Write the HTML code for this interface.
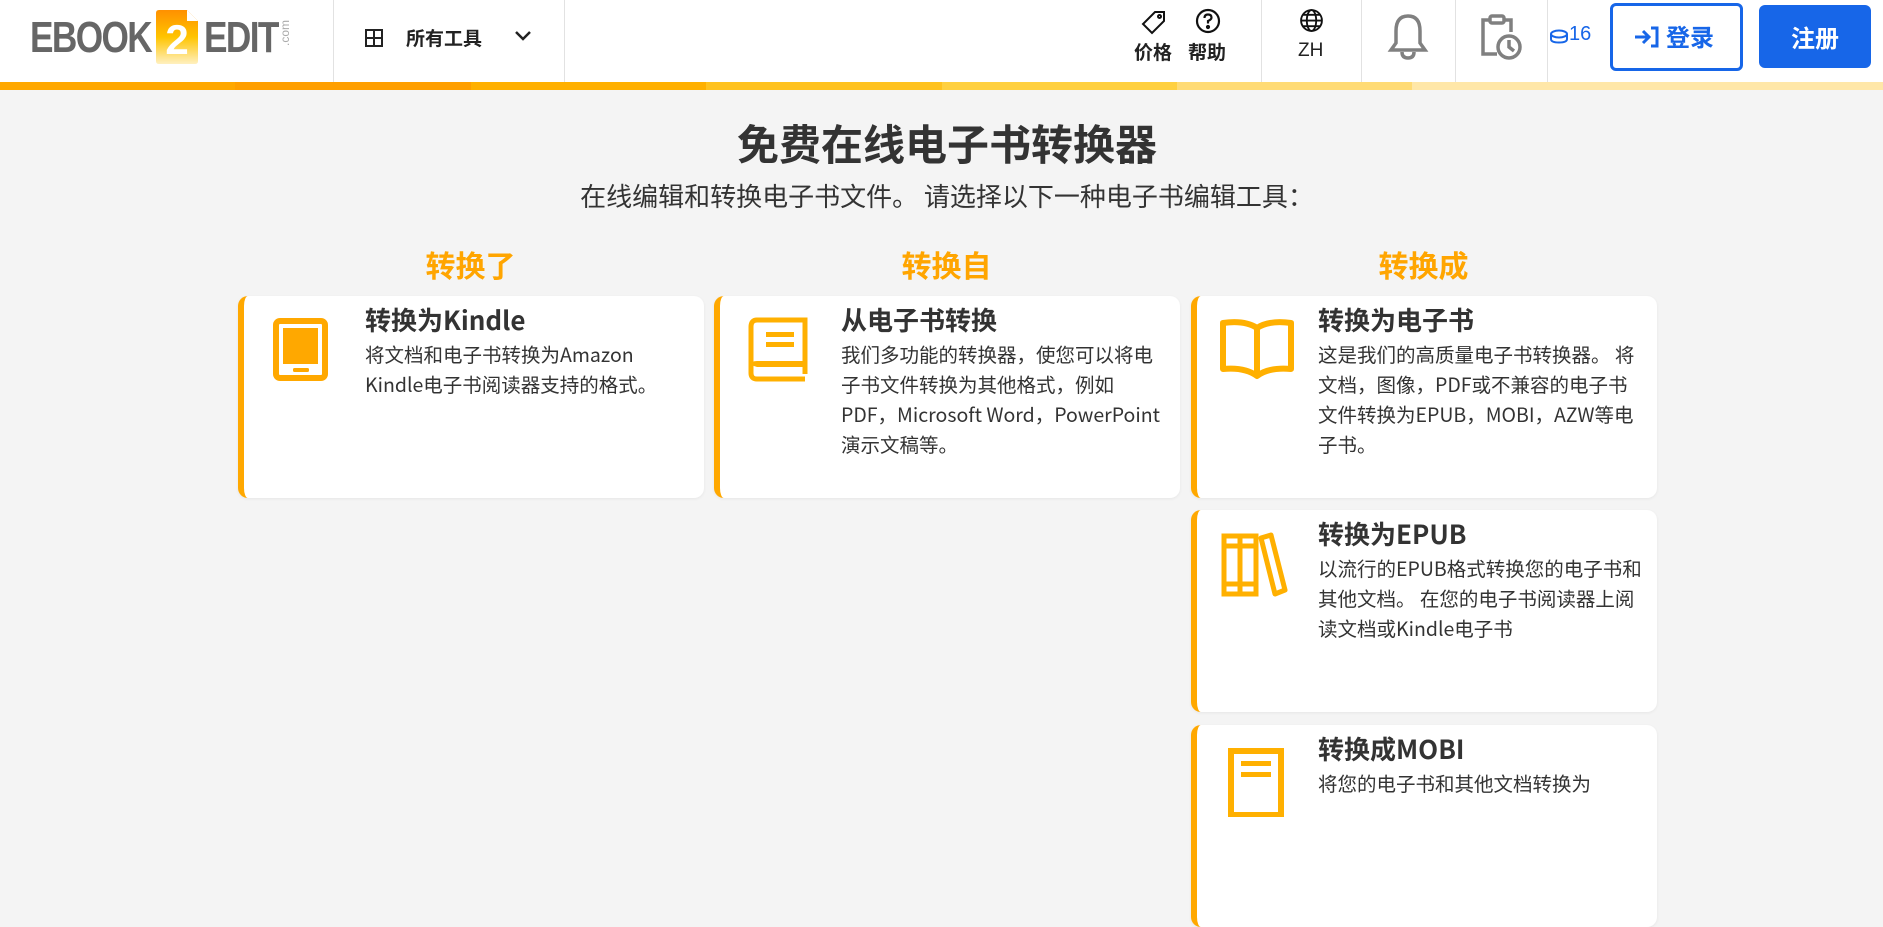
<!DOCTYPE html>
<html><head><meta charset="utf-8"><style>
*{box-sizing:border-box;margin:0;padding:0}
body{width:1883px;height:799px;overflow:hidden;background:#f4f4f4;font-family:"Liberation Sans","Noto Sans CJK SC",sans-serif;color:#333;position:relative}
.hdr{position:absolute;left:0;top:0;width:1883px;height:82px;background:#fff}
.bar{position:absolute;top:82px;left:0;width:1883px;height:8px;display:flex}
.bar div{flex:1}
.abs{position:absolute}
.div{position:absolute;top:0;width:1px;height:82px;background:#e2e2e2}
.nt{position:absolute;font-size:19px;font-weight:bold;color:#222;font-family:"Noto Sans CJK SC",sans-serif}
h1{position:absolute;left:0;width:1894px;text-align:center;top:116px;font-size:42px;font-weight:bold;color:#333;font-family:"Noto Sans CJK SC",sans-serif;line-height:54px}
.sub{position:absolute;left:0;width:1894px;text-align:center;top:179px;font-size:26px;color:#333;font-family:"Noto Sans CJK SC",sans-serif;line-height:34px}
.ch{position:absolute;top:245px;width:465px;text-align:center;font-size:30px;font-weight:bold;color:#ffa500;font-family:"Noto Sans CJK SC",sans-serif;line-height:38px}
.card{position:absolute;width:466px;background:#fff;border-radius:10px;border-left:6px solid #ffa800;box-shadow:0 1px 3px rgba(0,0,0,.06)}
.card svg{position:absolute;left:26px;top:20px}
.card .t{position:absolute;left:121px;top:6px;font-size:26px;font-weight:bold;color:#333;line-height:36px;font-family:"Noto Sans CJK SC",sans-serif}
.card .d{position:absolute;left:121px;top:43px;width:322px;font-size:19.5px;line-height:30px;color:#333;font-family:"Noto Sans CJK SC",sans-serif}
</style></head><body>
<div class="hdr"></div>
<div class="bar"><div style="background:#ffa800"></div><div style="background:#ff9f00"></div><div style="background:#ffb000"></div><div style="background:#ffc21f"></div><div style="background:#ffd040"></div><div style="background:#ffdb75"></div><div style="background:#ffe7a8"></div><div style="background:#ffe7a8"></div></div>

<div class="abs" style="left:30px;top:14px;font:bold 44px/48px 'Liberation Sans',sans-serif;color:#666;letter-spacing:-2px;transform:scaleX(.8);transform-origin:left">EBOOK</div>
<svg class="abs" style="left:156px;top:10px" width="42" height="54" viewBox="0 0 42 54">
<defs><linearGradient id="g" x1="0" y1="0" x2="0" y2="1"><stop offset="0" stop-color="#ff9000"/><stop offset=".5" stop-color="#ffc400"/><stop offset="1" stop-color="#fff0c0"/></linearGradient></defs>
<path d="M3 0H31L42 11V51Q42 54 39 54H3Q0 54 0 51V3Q0 0 3 0Z" fill="url(#g)"/><path d="M31 0V11H42Z" fill="#fff"/>
<text x="21" y="44" text-anchor="middle" font-family="Liberation Sans" font-weight="bold" font-size="42" fill="#fff">2</text></svg>
<div class="abs" style="left:204px;top:14px;font:bold 44px/48px 'Liberation Sans',sans-serif;color:#666;letter-spacing:-2px;transform:scaleX(.8);transform-origin:left">EDIT</div>
<div class="abs" style="left:272px;top:26px;font:12px 'Liberation Sans',sans-serif;color:#aaa;transform:rotate(-90deg);transform-origin:center">.com</div>

<div class="div" style="left:333px"></div>
<svg class="abs" style="left:365px;top:29px" width="18" height="18" viewBox="0 0 18 18" fill="none" stroke="#222" stroke-width="2"><rect x="1" y="1" width="16" height="16"/><path d="M9 1V17M1 9H17"/></svg>
<div class="nt" style="left:406px;top:24px">所有工具</div>
<svg class="abs" style="left:514px;top:30px" width="18" height="12" viewBox="0 0 18 12" fill="none" stroke="#222" stroke-width="2.5"><path d="M2 2L9 9L16 2"/></svg>
<div class="div" style="left:564px"></div>

<svg class="abs" style="left:1141px;top:9px" width="26" height="26" viewBox="0 0 26 26" fill="none" stroke="#111" stroke-width="2"><path d="M14 3H23V12L11 24L2 15Z"/><circle cx="18.5" cy="7.5" r="1.5"/></svg>
<div class="nt" style="left:1134px;top:38px">价格</div>
<svg class="abs" style="left:1195px;top:8px" width="26" height="26" viewBox="0 0 26 26" fill="none" stroke="#111" stroke-width="2.2"><circle cx="13" cy="13" r="11"/><path d="M9.5 10Q9.5 6.5 13 6.5Q16.5 6.5 16.5 9.5Q16.5 11.5 13 13V15.5"/><circle cx="13" cy="19" r="1" fill="#111"/></svg>
<div class="nt" style="left:1188px;top:38px">帮助</div>
<div class="div" style="left:1261px"></div>
<svg class="abs" style="left:1299px;top:8px" width="25" height="25" viewBox="0 0 24 24" fill="none" stroke="#111" stroke-width="1.8"><circle cx="12" cy="12" r="10"/><ellipse cx="12" cy="12" rx="4.5" ry="10"/><path d="M2 12H22M4 6.5H20M4 17.5H20"/></svg>
<div class="abs" style="left:1298px;top:40px;font:19px 'Liberation Sans',sans-serif;color:#222">ZH</div>
<div class="div" style="left:1361px"></div>
<svg class="abs" style="left:1386px;top:13px" width="44" height="48" viewBox="0 0 44 48" fill="none" stroke="#808080" stroke-width="3.5"><path d="M22 3Q10 3 10 18V30L5 37H39L34 30V18Q34 3 22 3Z"/><path d="M16 39Q16 45 22 45Q28 45 28 39"/></svg>
<div class="div" style="left:1455px"></div>
<svg class="abs" style="left:1479px;top:14px" width="44" height="47" viewBox="0 0 44 47" fill="none" stroke="#808080" stroke-width="3.5"><path d="M18 40H4V6H11M25 6H32V18"/><rect x="11" y="2" width="14" height="7" rx="2"/><circle cx="30" cy="33" r="11"/><path d="M30 26V33L35 37"/></svg>
<div class="div" style="left:1547px"></div>
<svg class="abs" style="left:1549px;top:29px" width="20" height="16" viewBox="0 0 20 16" fill="none" stroke="#1766e8" stroke-width="2"><ellipse cx="10" cy="5" rx="8" ry="3.5"/><path d="M2 5V10Q2 13.5 10 13.5Q18 13.5 18 10V5"/></svg>
<div class="abs" style="left:1569px;top:23px;font:20px 'Liberation Sans',sans-serif;color:#1766e8">16</div>
<div class="abs" style="left:1610px;top:3px;width:133px;height:68px;border:3px solid #1766e8;border-radius:6px"></div>
<svg class="abs" style="left:1634px;top:26px" width="26" height="22" viewBox="0 0 26 22" fill="none" stroke="#1766e8" stroke-width="3"><path d="M1 11H14M9 5L15 11L9 17M17 2H23V20H17"/></svg>
<div class="abs" style="left:1666px;top:19px;font:bold 24px/34px 'Noto Sans CJK SC',sans-serif;color:#1766e8">登录</div>
<div class="abs" style="left:1759px;top:5px;width:112px;height:63px;background:#1766e8;border-radius:6px;color:#fff;font:bold 24px/63px 'Noto Sans CJK SC',sans-serif;text-align:center">注册</div>

<h1>免费在线电子书转换器</h1>
<div class="sub">在线编辑和转换电子书文件。 请选择以下一种电子书编辑工具：</div>

<div class="ch" style="left:238px">转换了</div>
<div class="ch" style="left:714px">转换自</div>
<div class="ch" style="left:1191px">转换成</div>

<div class="card" style="left:238px;top:296px;height:202px">
<svg width="62" height="68" viewBox="0 0 62 68"><rect x="6" y="5" width="49" height="57" rx="4" fill="none" stroke="#ffa800" stroke-width="6"/><rect x="13" y="12" width="35" height="36" fill="#ffa800"/><rect x="23" y="52" width="16" height="4" rx="1.5" fill="#ffa800"/></svg>
<div class="t">转换为Kindle</div>
<div class="d">将文档和电子书转换为Amazon Kindle电子书阅读器支持的格式。</div></div>

<div class="card" style="left:714px;top:296px;height:202px">
<svg width="64" height="68" viewBox="0 0 64 68"><path d="M59 58V4H11Q5 4 5 11V57Q5 63 11 63H59" fill="none" stroke="#ffb000" stroke-width="5"/><path d="M5 49Q5 45 11 45H60V51H11" fill="#ffb000"/><rect x="20" y="16" width="28" height="5" fill="#ffb000"/><rect x="20" y="26" width="28" height="5" fill="#ffb000"/></svg>
<div class="t">从电子书转换</div>
<div class="d">我们多功能的转换器，使您可以将电子书文件转换为其他格式，例如PDF，Microsoft Word，PowerPoint演示文稿等。</div></div>

<div class="card" style="left:1191px;top:296px;height:202px">
<svg width="84" height="66" viewBox="0 0 84 66" style="left:18px"><path d="M42 60V12Q30 4 8 7V53Q30 51 42 60Q54 51 76 53V7Q54 4 42 12" fill="none" stroke="#ffb000" stroke-width="6" stroke-linejoin="round"/></svg>
<div class="t">转换为电子书</div>
<div class="d">这是我们的高质量电子书转换器。 将文档，图像，PDF或不兼容的电子书文件转换为EPUB，MOBI，AZW等电子书。</div></div>

<div class="card" style="left:1191px;top:510px;height:202px">
<svg width="76" height="66" viewBox="0 0 76 66" style="left:22px;top:22px"><rect x="5" y="4" width="16" height="58" fill="none" stroke="#ffb000" stroke-width="5"/><rect x="21" y="4" width="16" height="58" fill="none" stroke="#ffb000" stroke-width="5"/><path d="M5 14H37M5 52H37" stroke="#ffb000" stroke-width="5"/><path d="M42 6L52 3L66 58L56 62Z" fill="none" stroke="#ffb000" stroke-width="5" stroke-linejoin="round"/></svg>
<div class="t">转换为EPUB</div>
<div class="d" style="width:330px">以流行的EPUB格式转换您的电子书和其他文档。 在您的电子书阅读器上阅读文档或Kindle电子书</div></div>

<div class="card" style="left:1191px;top:725px;height:202px">
<svg width="62" height="70" viewBox="0 0 62 70" style="left:30px;top:22px"><rect x="4" y="4" width="50" height="64" fill="none" stroke="#ffb000" stroke-width="6"/><rect x="14" y="14" width="30" height="5" fill="#ffb000"/><rect x="14" y="25" width="30" height="5" fill="#ffb000"/></svg>
<div class="t">转换成MOBI</div>
<div class="d">将您的电子书和其他文档转换为</div></div>
</body></html>
